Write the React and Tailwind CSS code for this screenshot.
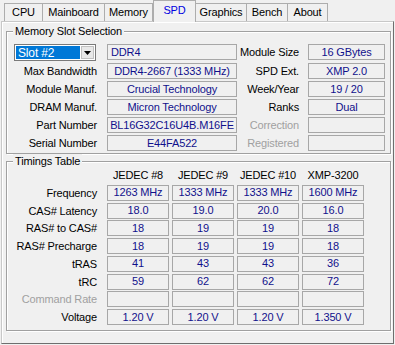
import React from 'react';

const tabs = [
    { name: 'CPU', w: 'w-[39px]' },
    { name: 'Mainboard', w: 'w-[63px]' },
    { name: 'Memory', w: 'w-[49px]' },
    { name: 'SPD', w: 'w-[43px]', active: true },
    { name: 'Graphics', w: 'w-[52px]' },
    { name: 'Bench', w: 'w-[42px]' },
    { name: 'About', w: 'w-[41px]' },
];

const slotRows = [
    ['Max Bandwidth', 'DDR4-2667 (1333 MHz)', 'SPD Ext.', 'XMP 2.0'],
    ['Module Manuf.', 'Crucial Technology', 'Week/Year', '19 / 20'],
    ['DRAM Manuf.', 'Micron Technology', 'Ranks', 'Dual'],
    ['Part Number', 'BL16G32C16U4B.M16FE', 'Correction', '', true],
    ['Serial Number', 'E44FA522', 'Registered', '', true],
];

const timings = [
    ['Frequency', '1263 MHz', '1333 MHz', '1333 MHz', '1600 MHz'],
    ['CAS# Latency', '18.0', '19.0', '20.0', '16.0'],
    ['RAS# to CAS#', '18', '19', '19', '18'],
    ['RAS# Precharge', '18', '19', '19', '18'],
    ['tRAS', '41', '43', '43', '36'],
    ['tRC', '59', '62', '62', '72'],
    ['Command Rate', '', '', '', '', true],
    ['Voltage', '1.20 V', '1.20 V', '1.20 V', '1.350 V'],
];

function Field({ children, className = '' }) {
    return (
        <div className={`h-[16px] border border-[#a7a7a7] bg-[#f0f0f0] text-[#10108c] flex items-center justify-center leading-none whitespace-nowrap overflow-hidden ${className}`}>
            {children}
        </div>
    );
}

function Group({ title, className = '', children }) {
    return (
        <div className={`relative ml-[4px] w-[385px] border border-[#a0a0a0] shadow-[inset_1px_1px_0_#fff,1px_1px_0_#fff] ${className}`}>
            <span className="absolute -top-[8px] left-[6px] bg-[#f0f0f0] px-[2px] leading-[14px]">{title}</span>
            {children}
        </div>
    );
}

export default function App() {
    return (
        <div className="w-[395px] h-[345px] bg-[#f0f0f0] text-black text-[11px] tracking-[-0.15px] font-['Liberation_Sans',Arial,sans-serif] overflow-hidden">
            <div className="flex items-end h-[21px] pl-[4px] relative z-10">
                {tabs.map(t => (
                    <div
                        key={t.name}
                        className={`${t.w} flex items-center justify-center border border-b-0 border-[#adadad] leading-none ${t.active ? 'h-[22px] -mb-px bg-[#f0f0f0] text-[#0000e0] pb-[2px]' : 'h-[18px] bg-[#f0f0f0] -ml-px first:ml-0'}`}
                    >
                        {t.name}
                    </div>
                ))}
            </div>

            <div className="ml-[1px] w-[393px] h-[323px] border border-[#c8c8c8] border-r-[#6e6e6e] border-b-[#6e6e6e] shadow-[inset_1px_1px_0_#fff]">
                <Group title="Memory Slot Selection" className="mt-[9px] h-[123px]">
                    <div className="flex flex-col gap-[2px] pt-[12px] pl-[7px]">
                        <div className="flex items-start h-[17px]">
                            <div className="w-[82px] h-[17px] border border-[#7a7a7a] bg-white flex p-px">
                                <div className="flex-1 bg-[#0078d7] text-white flex items-center pl-[2px] text-[12px] leading-none">Slot #2</div>
                                <div className="w-[13px] ml-px bg-[#e8e8e8] border border-[#c0c0c0] flex items-center justify-center">
                                    <svg width="7" height="4" viewBox="0 0 7 4"><path d="M0 0h7L3.5 4z" fill="#000" /></svg>
                                </div>
                            </div>
                            <Field className="ml-[11px] w-[130px] !justify-start pl-[3px]">DDR4</Field>
                            <div className="w-[63px] text-right leading-[16px] pr-[1px]">Module Size</div>
                            <Field className="ml-[8px] w-[77px]">16 GBytes</Field>
                        </div>
                        {slotRows.map(r => (
                            <div key={r[0]} className="flex h-[16px]">
                                <div className="w-[83px] text-right leading-[16px]">{r[0]}</div>
                                <Field className="ml-[10px] w-[130px]">{r[1]}</Field>
                                <div className={`w-[63px] text-right leading-[16px] pr-[1px] ${r[4] ? 'text-[#a0a0a0]' : ''}`}>{r[2]}</div>
                                <Field className="ml-[8px] w-[77px]">{r[3]}</Field>
                            </div>
                        ))}
                    </div>
                </Group>

                <Group title="Timings Table" className="mt-[7px] h-[170px]">
                    <div className="flex flex-col gap-[1.75px] pt-[6px] pl-[7px]">
                        <div className="flex h-[15px] items-center">
                            <div className="w-[93px]" />
                            {['JEDEC #8', 'JEDEC #9', 'JEDEC #10', 'XMP-3200'].map(h => (
                                <div key={h} className="w-[62px] mr-[3px] text-center leading-none">{h}</div>
                            ))}
                        </div>
                        {timings.map(r => (
                            <div key={r[0]} className="flex h-[16px]">
                                <div className={`w-[83px] text-right leading-[16px] whitespace-nowrap ${r[5] ? 'text-[#a0a0a0]' : ''}`}>{r[0]}</div>
                                <div className="ml-[10px] flex gap-[3px]">
                                    {r.slice(1, 5).map((v, i) => (
                                        <Field key={i} className="w-[62px]">{v}</Field>
                                    ))}
                                </div>
                            </div>
                        ))}
                    </div>
                </Group>
            </div>
        </div>
    );
}
